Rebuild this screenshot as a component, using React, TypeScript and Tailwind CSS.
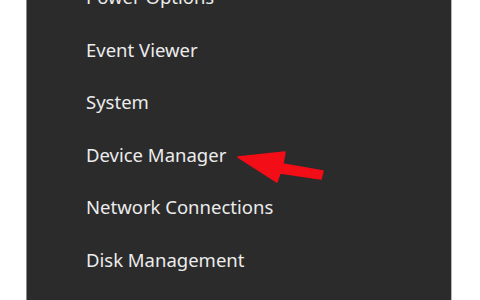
const items = [
  'Power Options',
  'Event Viewer',
  'System',
  'Device Manager',
  'Network Connections',
  'Disk Management',
  'Computer Management',
]

function Arrow() {
  return (
    <svg
      className="absolute left-0 top-0"
      width="480"
      height="300"
      viewBox="0 0 480 300"
    >
      <polygon
        points="238,157 285,152 283,164 323,171 321,179 280,173 277,182"
        fill="#f20d17"
        stroke="#f20d17"
        strokeWidth="1.5"
        strokeLinejoin="round"
      />
    </svg>
  )
}

export default function App() {
  return (
    <div className="relative h-[300px] w-[480px] overflow-hidden bg-white">
      <div className="ml-[26px] flex h-full w-[426px] flex-col overflow-hidden border-l border-r border-l-[#8a8a8a] border-r-[#b5b5b5] bg-[#2b2b2b]">
        <ul
          className="-mt-[29px] pl-[59px] text-[18.5px] text-[#ececec]"
          style={{ fontFamily: '"Noto Sans", "Open Sans", sans-serif' }}
        >
          {items.map((label) => (
            <li key={label} className="flex h-[52.5px] shrink-0 items-center">
              {label}
            </li>
          ))}
        </ul>
      </div>
      <Arrow />
    </div>
  )
}
